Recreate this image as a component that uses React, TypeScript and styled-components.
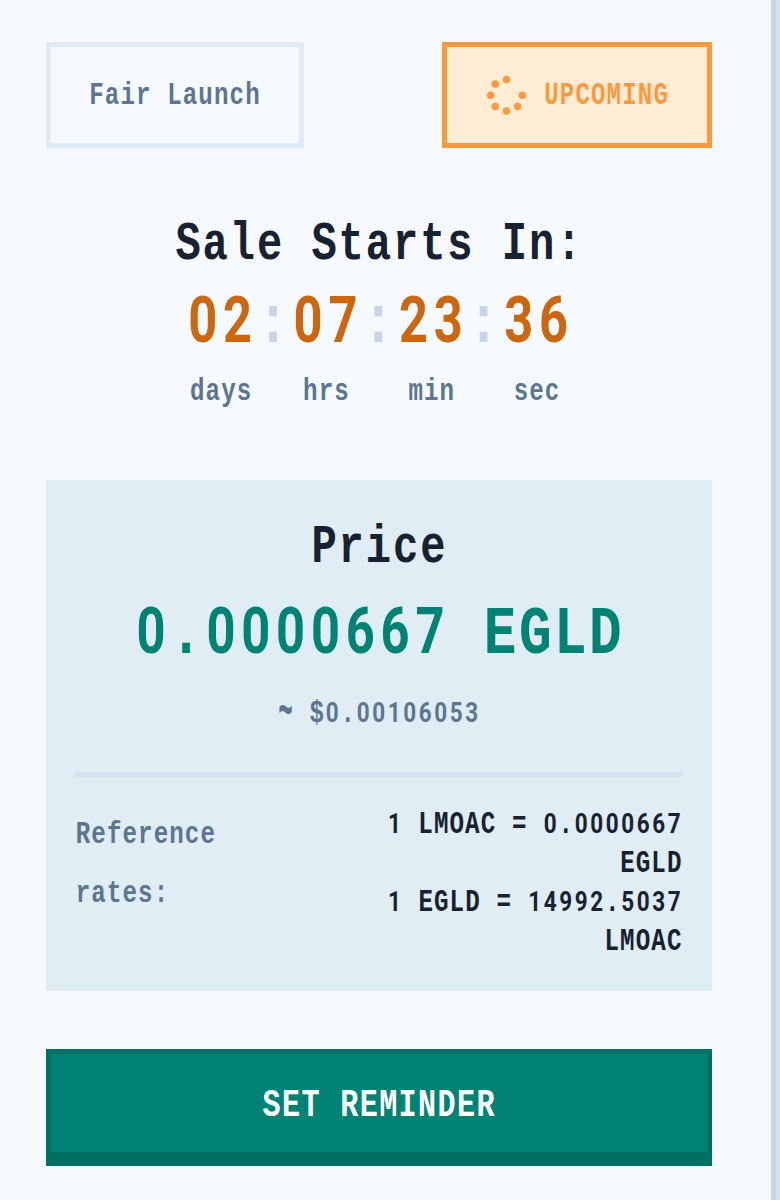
import React from 'react';
import styled, { createGlobalStyle } from 'styled-components';

const GlobalStyle = createGlobalStyle`
  body { margin: 0; background: #dddee8; }
  * { box-sizing: border-box; }
`;

const color = {
  page: '#f6faff', ink: '#18212f', muted: '#5d7590', line: '#e0ebf4', panel: '#e0edf4',
  divider: '#d5e0f0', edge: '#c7d3e6', orange: '#fa993e', orangeSoft: '#ffecd5',
  amber: '#cb670f', teal: '#008375', tealDark: '#007064',
};

/* Tall, narrow terminal lettering in four sizes. */
const sizes = { small: 24.18, button: 30.15, heading: 42.16, large: 54.4 };
type Size = keyof typeof sizes;

const Terminal = styled.span<{ $size: Size }>`
  display: inline-block;
  white-space: pre;
  font-family: 'Liberation Mono', monospace;
  font-weight: 700;
  font-size: ${p => sizes[p.$size]}px;
  letter-spacing: 0.045em;
  line-height: 1.2;
  padding-left: 0.03em;
  transform: scaleY(1.27);
`;
const Digits = styled.span`
  font-family: Roboto, sans-serif;
  font-weight: 700;
  font-size: 0.93em;
  line-height: 1;
  letter-spacing: 0.115em;
  margin: 0 -0.03em 0 0.03em;
`;
const Wave = styled.span`
  display: inline-block;
  line-height: 1;
  transform: scaleY(1.9);
`;

function Text({ size = 'small', children }: { size?: Size; children: string }) {
  return (
    <Terminal $size={size}>
      {children.split(/(\d+|~)/).filter(Boolean).map((part, i) => {
        if (part === '~') return <Wave key={i}>{part}</Wave>;
        return /^\d/.test(part) ? <Digits key={i}>{part}</Digits> : part;
      })}
    </Terminal>
  );
}

const Card = styled.main`
  display: flex;
  flex-direction: column;
  gap: 58px;
  width: 776px;
  height: 1200px;
  padding: 41.5px 59px 0 45.5px;
  background: ${color.page};
  border-right: 5px solid ${color.edge};
  overflow: hidden;
`;
const Badges = styled.header`
  display: flex;
  justify-content: space-between;
  height: 106.5px;
`;
const Badge = styled.div<{ $active?: boolean }>`
  display: flex;
  align-items: center;
  gap: 18px;
  padding: 2px 38px 0 ${p => (p.$active ? 38.5 : 38)}px;
  border: 5px solid ${p => (p.$active ? color.orange : color.line)};
  background: ${p => (p.$active ? color.orangeSoft : 'transparent')};
  color: ${p => (p.$active ? color.orange : color.muted)};
`;
const Spinner = styled.svg`
  width: 40px;
  height: 40px;
  fill: currentColor;
`;
const Line = styled.div<{ $height: number; $color?: string }>`
  display: flex;
  align-items: center;
  justify-content: center;
  height: ${p => p.$height}px;
  color: ${p => p.$color ?? color.ink};
`;
const Sale = styled.section`
  display: flex;
  flex-direction: column;
`;
const Countdown = styled.div`
  display: flex;
  justify-content: center;
`;
const Unit = styled.div`
  display: flex;
  flex-direction: column;
  width: 68.6px;
`;
const Panel = styled.section`
  display: flex;
  flex-direction: column;
  gap: 28.5px;
  height: 511px;
  padding: 30px 29.5px 0;
  background: ${color.panel};
`;
const Price = styled.div`
  display: flex;
  flex-direction: column;
`;
const Rates = styled.div`
  display: flex;
  justify-content: space-between;
  padding-top: 29px;
  border-top: 5px solid ${color.divider};
`;
const Column = styled.div<{ $end?: boolean }>`
  display: flex;
  flex-direction: column;
  align-items: ${p => (p.$end ? 'flex-end' : 'flex-start')};
`;
const Reminder = styled.button`
  display: flex;
  align-items: center;
  justify-content: center;
  height: 116.5px;
  padding: 7px 0 0;
  border: 5px solid ${color.tealDark};
  border-bottom-width: 14.6px;
  background: ${color.teal};
  color: #fff;
`;

const units = [['02', 'days'], ['07', 'hrs'], ['23', 'min'], ['36', 'sec']];
const rates = ['1 LMOAC = 0.0000667', 'EGLD', '1 EGLD = 14992.5037', 'LMOAC'];
const dots = [[20.5, 3.5], [9.3, 8], [4.7, 19.2], [9.3, 30.5], [20.5, 35], [31.7, 30.5], [36.3, 19.2]];

export default function App() {
  return (
    <>
      <GlobalStyle />
      <Card>
        <Badges>
          <Badge><Text>Fair Launch</Text></Badge>
          <Badge $active>
            <Spinner viewBox="0 0 40 40">
              {dots.map(([x, y]) => <circle key={`${x}-${y}`} cx={x} cy={y} r="3.8" />)}
            </Spinner>
            <Text>UPCOMING</Text>
          </Badge>
        </Badges>
        <Sale>
          <Line $height={79}><Text size="heading">Sale Starts In:</Text></Line>
          <Countdown>
            {units.map(([value, label], i) => (
              <React.Fragment key={label}>
                {i > 0 && <Line $height={77} $color={color.edge}><Text size="large">:</Text></Line>}
                <Unit>
                  <Line $height={77} $color={color.amber}><Text size="large">{value}</Text></Line>
                  <Line $height={60} $color={color.muted}><Text>{label}</Text></Line>
                </Unit>
              </React.Fragment>
            ))}
          </Countdown>
        </Sale>
        <Panel>
          <Price>
            <Line $height={76}><Text size="heading">Price</Text></Line>
            <Line $height={98} $color={color.teal}><Text size="large">0.0000667 EGLD</Text></Line>
            <Line $height={59} $color={color.muted}><Text>~ $0.00106053</Text></Line>
          </Price>
          <Rates>
            <Column>
              <Line $height={58.5} $color={color.muted}><Text>Reference</Text></Line>
              <Line $height={58.5} $color={color.muted}><Text>rates:</Text></Line>
            </Column>
            <Column $end>
              {rates.map(rate => <Line key={rate} $height={39}><Text>{rate}</Text></Line>)}
            </Column>
          </Rates>
        </Panel>
        <Reminder><Text size="button">SET REMINDER</Text></Reminder>
      </Card>
    </>
  );
}
